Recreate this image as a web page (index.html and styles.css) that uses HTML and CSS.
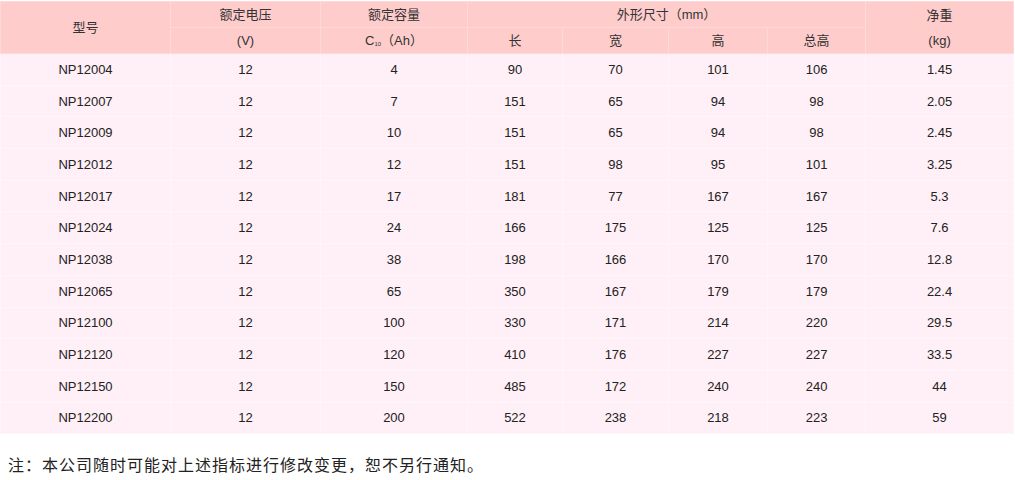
FILE: index.html
```html
<!DOCTYPE html>
<html lang="zh">
<head>
<meta charset="utf-8">
<link rel="stylesheet" href="styles.css">
</head>
<body>
<table class="spec">
  <colgroup>
    <col class="c1"><col class="c2"><col class="c3"><col class="c4"><col class="c5"><col class="c6"><col class="c7"><col class="c8">
  </colgroup>
  <thead>
    <tr class="h1">
      <th rowspan="2">型号</th>
      <th>额定电压</th>
      <th>额定容量</th>
      <th colspan="4">外形尺寸（mm）</th>
      <th rowspan="2">净重<br>(kg)</th>
    </tr>
    <tr class="h2">
      <th>(V)</th>
      <th>C<sub>10</sub>（Ah）</th>
      <th>长</th>
      <th>宽</th>
      <th>高</th>
      <th>总高</th>
    </tr>
  </thead>
  <tbody>
    <tr><td>NP12004</td><td>12</td><td>4</td><td>90</td><td>70</td><td>101</td><td>106</td><td>1.45</td></tr>
    <tr><td>NP12007</td><td>12</td><td>7</td><td>151</td><td>65</td><td>94</td><td>98</td><td>2.05</td></tr>
    <tr><td>NP12009</td><td>12</td><td>10</td><td>151</td><td>65</td><td>94</td><td>98</td><td>2.45</td></tr>
    <tr><td>NP12012</td><td>12</td><td>12</td><td>151</td><td>98</td><td>95</td><td>101</td><td>3.25</td></tr>
    <tr><td>NP12017</td><td>12</td><td>17</td><td>181</td><td>77</td><td>167</td><td>167</td><td>5.3</td></tr>
    <tr><td>NP12024</td><td>12</td><td>24</td><td>166</td><td>175</td><td>125</td><td>125</td><td>7.6</td></tr>
    <tr><td>NP12038</td><td>12</td><td>38</td><td>198</td><td>166</td><td>170</td><td>170</td><td>12.8</td></tr>
    <tr><td>NP12065</td><td>12</td><td>65</td><td>350</td><td>167</td><td>179</td><td>179</td><td>22.4</td></tr>
    <tr><td>NP12100</td><td>12</td><td>100</td><td>330</td><td>171</td><td>214</td><td>220</td><td>29.5</td></tr>
    <tr><td>NP12120</td><td>12</td><td>120</td><td>410</td><td>176</td><td>227</td><td>227</td><td>33.5</td></tr>
    <tr><td>NP12150</td><td>12</td><td>150</td><td>485</td><td>172</td><td>240</td><td>240</td><td>44</td></tr>
    <tr><td>NP12200</td><td>12</td><td>200</td><td>522</td><td>238</td><td>218</td><td>223</td><td>59</td></tr>
  </tbody>
</table>
<p class="note">注：本公司随时可能对上述指标进行修改变更，恕不另行通知。</p>
</body>
</html>
```
FILE: styles.css
```css
html, body {
  margin: 0;
  padding: 0;
  background: #ffffff;
}
body {
  font-family: "Liberation Sans", "Noto Sans CJK SC", sans-serif;
  color: #222222;
}
.spec {
  width: 1013px;
  border-collapse: collapse;
  table-layout: fixed;
  font-size: 13px;
  margin-top: 1px;
}
.c1 { width: 170px; }
.c2 { width: 150px; }
.c3 { width: 147px; }
.c4 { width: 95px; }
.c5 { width: 106px; }
.c6 { width: 99px; }
.c7 { width: 98px; }
.c8 { width: 148px; }
.spec th {
  background: #ffcccc;
  font-weight: normal;
  color: #333333;
  border: 1px solid #ffd9d9;
  padding: 0;
  line-height: 25px;
  text-align: center;
}
.spec .h1 th { height: 25px; }
.spec .h2 th { height: 24px; }
.spec sub {
  font-size: 6px;
  vertical-align: -1px;
  line-height: 0;
}
.spec td {
  background: #fff0f7;
  border: 1px solid #fff5fa;
  text-align: center;
  height: 30.7px;
  padding: 0;
  color: #222222;
}
.note {
  margin: 18px 0 0 8px;
  font-size: 16px;
  letter-spacing: 1px;
  color: #222222;
}
```
